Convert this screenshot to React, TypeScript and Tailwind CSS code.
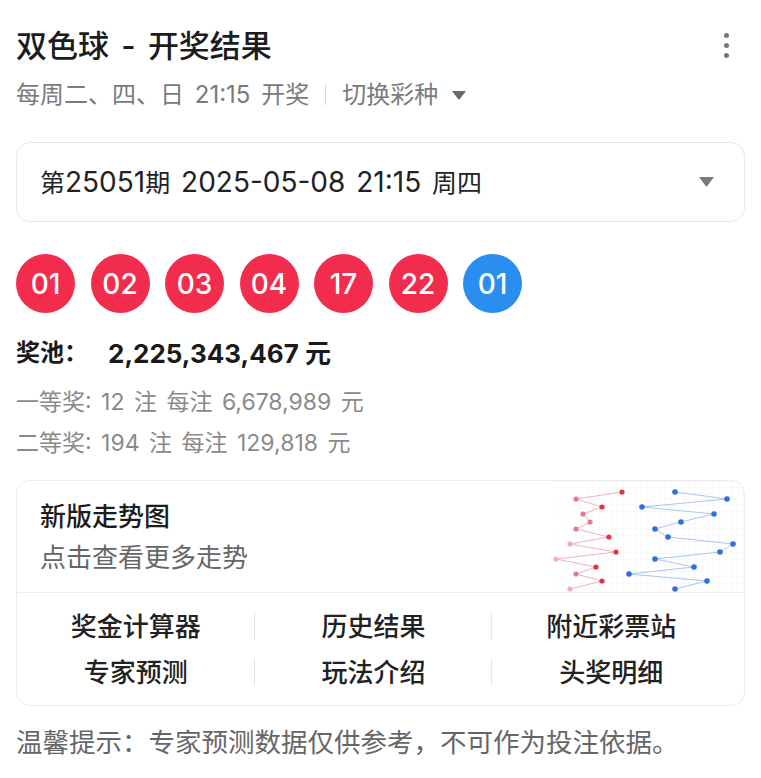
import React from 'react'

const FONT = { fontFamily: 'Inter, "Noto Sans CJK SC", sans-serif' }

const balls = [
  { n: '01', red: true }, { n: '02', red: true }, { n: '03', red: true },
  { n: '04', red: true }, { n: '17', red: true }, { n: '22', red: true },
  { n: '01', red: false },
]

const links = [
  ['奖金计算器', '历史结果', '附近彩票站'],
  ['专家预测', '玩法介绍', '头奖明细'],
]

// chart points, relative to chart box (x 548, y 481)
const red = [
  [71, 11], [25, 18], [51, 26], [32, 33], [39, 41], [25, 48], [58, 56],
  [19, 63], [65, 71], [5, 78], [45, 86], [25, 93], [51, 100], [19, 108],
]
const blue = [
  [124, 11], [176, 18], [91, 26], [163, 33], [130, 41], [104, 48], [117, 56],
  [182, 63], [169, 71], [104, 78], [143, 86], [78, 93], [156, 100], [124, 108],
]

// latin runs (digits, dates) render a touch larger than the CJK around them
function Mixed({ text, latin }: { text: string; latin: string }) {
  return (
    <>
      {text.split(/([0-9A-Za-z:,.\- ]+)/).map((s, i) =>
        /[0-9A-Za-z\-]/.test(s) ? <span key={i} className={latin}>{s}</span> : s
      )}
    </>
  )
}

function TrendChart() {
  return (
    <svg width="193" height="111" viewBox="0 0 193 111" className="block">
      <defs>
        <pattern id="grid" width="6" height="6" patternUnits="userSpaceOnUse">
          <path d="M6 0H0V6" fill="none" stroke="#eef0f4" strokeWidth="0.8" />
        </pattern>
        <linearGradient id="fade" x1="0" x2="1" y1="0" y2="0">
          <stop offset="0" stopColor="#fff" stopOpacity="1" />
          <stop offset="0.25" stopColor="#fff" stopOpacity="0" />
        </linearGradient>
      </defs>
      <rect width="193" height="111" fill="url(#grid)" />
      <rect width="193" height="111" fill="url(#fade)" />
      <polyline points={red.map(p => p.join(',')).join(' ')} fill="none" stroke="#f0b4bd" strokeWidth="1" />
      <polyline points={blue.map(p => p.join(',')).join(' ')} fill="none" stroke="#a9c6ee" strokeWidth="1" />
      {red.map(([x, y], i) => {
        const t = Math.min(1, Math.max(0, (x - 5) / 66))
        const c = t > 0.55 ? '#e2334a' : t > 0.3 ? '#e27c8c' : '#efb0bb'
        return <circle key={'r' + i} cx={x} cy={y} r="2.6" fill={c} />
      })}
      {blue.map(([x, y], i) => (
        <circle key={'b' + i} cx={x} cy={y} r="2.8" fill="#2f6fd8" />
      ))}
    </svg>
  )
}

export default function App() {
  return (
    <div className="bg-white w-[761px] h-[778px] px-4 pt-[23px] overflow-hidden" style={FONT}>
      <div className="h-[44px] flex items-center justify-between">
        <h1 className="text-[31px] font-medium text-[#1c1c1c] leading-none">
          双色球<span className="mx-[4px]"> - </span>开奖结果
        </h1>
        <div className="flex flex-col gap-[5px] items-center mr-[16px]">
          <span className="w-[5px] h-[5px] rounded-full bg-[#777]" />
          <span className="w-[5px] h-[5px] rounded-full bg-[#777]" />
          <span className="w-[5px] h-[5px] rounded-full bg-[#777]" />
        </div>
      </div>

      <div className="h-[40px] mt-[8px] flex items-center text-[24px] text-[#7b7b7b] [word-spacing:4px]">
        <span>每周二、四、日 21:15 开奖</span>
        <span className="w-px h-[20px] bg-[#d4d4d4] mx-[16px]" />
        <span>切换彩种</span>
        <svg width="14" height="9" viewBox="0 0 14 9" className="ml-[14px]">
          <path d="M0 0H14L7 9Z" fill="#6b6b6b" />
        </svg>
      </div>

      <div className="mt-[27px] h-[80px] rounded-[14px] border border-[#e8e8e8] flex items-center justify-between pl-[23px] pr-[30px]">
        <span className="text-[25px] text-[#222] [word-spacing:3px]">
          <Mixed text="第25051期 2025-05-08 21:15 周四" latin="text-[28px]" />
        </span>
        <svg width="15" height="10" viewBox="0 0 15 10">
          <path d="M0 0H15L7.5 10Z" fill="#7a7a7a" />
        </svg>
      </div>

      <div className="mt-[32px] h-[59px] flex gap-[15.5px]">
        {balls.map((b, i) => (
          <div key={i}
            className={`w-[59px] h-[59px] rounded-full flex items-center justify-center text-white text-[28px] font-medium ${b.red ? 'bg-[#f22c4c]' : 'bg-[#2a8ef0]'}`}>
            {b.n}
          </div>
        ))}
      </div>

      <div className="mt-[20px] h-[40px] flex items-center text-[#1a1a1a] font-bold">
        <span className="text-[24px] w-[92px]">奖池：</span>
        <span className="text-[26px]">2,225,343,467 元</span>
      </div>
      <div className="mt-[9px] h-[41px] flex items-center text-[23px] text-[#8a8a8a] [word-spacing:3px]">一等奖: 12 注 每注 6,678,989 元</div>
      <div className="h-[41px] flex items-center text-[23px] text-[#8a8a8a] [word-spacing:3px]">二等奖: 194 注 每注 129,818 元</div>

      <div className="mt-[16px] rounded-[14px] border border-[#ececec] overflow-hidden">
        <div className="h-[112px] flex justify-between border-b border-[#ececec]">
          <div className="pl-[23px]">
            <div className="mt-[17px] h-[36px] flex items-center text-[26px] font-medium text-[#1c1c1c]">新版走势图</div>
            <div className="mt-[3px] h-[40px] flex items-center text-[26px] text-[#666]">点击查看更多走势</div>
          </div>
          <TrendChart />
        </div>
        <div className="pt-[10px] pb-[10px] pr-[14px]">
          {links.map((row, ri) => (
            <div key={ri} className="h-[46px] grid grid-cols-3">
              {row.map((t, ci) => (
                <div key={t} className="relative flex items-center justify-center text-[26px] font-medium text-[#222]">
                  {t}
                  {ci < 2 && <span className="absolute right-0 top-[9px] w-px h-[28px] bg-[#e6e6e6]" />}
                </div>
              ))}
            </div>
          ))}
        </div>
      </div>

      <div className="mt-[17px] h-[40px] flex items-center text-[26.5px] text-[#666]">
        温馨提示：专家预测数据仅供参考，不可作为投注依据。
      </div>
    </div>
  )
}
